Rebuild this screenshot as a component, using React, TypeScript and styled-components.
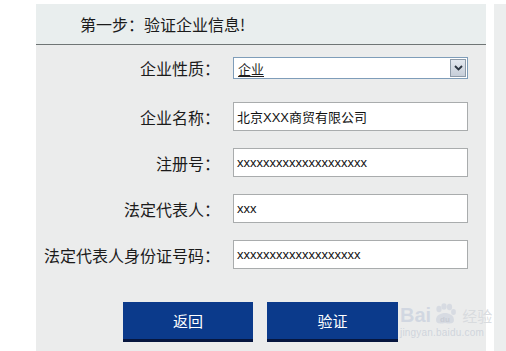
import * as React from "react";
import styled, { createGlobalStyle } from "styled-components";

const GlobalStyle = createGlobalStyle`
  html, body {
    margin: 0;
    padding: 0;
    background: #ffffff;
  }
  body {
    font-family: "Noto Sans CJK SC", "Liberation Sans", sans-serif;
    color: #1e1e1e;
  }
`;

const Page = styled.div`
  display: flex;
  align-items: stretch;
  width: 506px;
  height: 351px;
  padding: 4px 0 0 36px;
  box-sizing: border-box;
  gap: 8px;
  overflow: hidden;
  position: relative;
`;

const Panel = styled.div`
  width: 450px;
  flex-shrink: 0;
  background: #ebecec;
  display: flex;
  flex-direction: column;
`;

const SideStrip = styled.div`
  flex: 1;
  background: #eceeee;
`;

const Header = styled.div`
  height: 40px;
  background: #e9eeee;
  border-bottom: 1px solid #6f7575;
  display: flex;
  align-items: center;
  padding-left: 44px;
  font-size: 16px;
  color: #1b1b1b;
`;

const Form = styled.div`
  display: flex;
  flex-direction: column;
  gap: 17px;
  padding-top: 12px;
`;

const Row = styled.div<{ $tall?: boolean }>`
  display: grid;
  grid-template-columns: 184px 235px;
  column-gap: 13px;
  align-items: center;
  height: ${(p) => (p.$tall ? "29px" : "22px")};
  margin-bottom: ${(p) => (p.$tall ? "0" : "6px")};
`;

const Label = styled.span`
  text-align: right;
  font-size: 16px;
  line-height: 1;
  white-space: nowrap;
  color: #1b1b1b;
`;

const Input = styled.div`
  height: 29px;
  box-sizing: border-box;
  background: #ffffff;
  border: 1px solid #a9acad;
  display: flex;
  align-items: center;
  padding-left: 3px;
  font-family: "Liberation Sans", "Noto Sans CJK SC", sans-serif;
  font-size: 13px;
  color: #111;
`;

const Select = styled.div`
  height: 22px;
  box-sizing: border-box;
  background: #ffffff;
  border: 1px solid #7f9db9;
  display: flex;
  align-items: center;
  justify-content: space-between;
  padding: 0 1px 0 4px;
  font-size: 13px;
`;

const SelectValue = styled.span`
  text-decoration: underline;
  text-underline-offset: 2px;
`;

const ArrowButton = styled.div`
  width: 16px;
  height: 18px;
  box-sizing: border-box;
  border: 1px solid #8d9aa8;
  background: linear-gradient(#e3e8ef, #c6ced9);
  display: flex;
  align-items: center;
  justify-content: center;
`;

const Buttons = styled.div`
  display: flex;
  gap: 14px;
  margin-top: 33px;
  padding-left: 87px;
`;

const Button = styled.div<{ $width: number }>`
  width: ${(p) => p.$width}px;
  height: 40px;
  box-sizing: border-box;
  background: #0b3a8b;
  border-bottom: 3px solid #06163f;
  color: #ffffff;
  font-size: 15px;
  display: flex;
  align-items: center;
  justify-content: center;
`;

const Watermark = styled.div`
  position: absolute;
  left: 400px;
  top: 303px;
  display: flex;
  flex-direction: column;
  color: rgba(205, 212, 224, 0.85);
  pointer-events: none;
`;

const MarkTop = styled.div`
  display: flex;
  align-items: flex-end;
  gap: 2px;
  font-family: "Liberation Sans", sans-serif;
  font-weight: bold;
  font-size: 20px;
  line-height: 20px;
`;

const MarkCn = styled.span`
  font-family: "Noto Sans CJK SC", sans-serif;
  font-weight: normal;
  font-size: 15px;
  line-height: 18px;
  color: rgba(215, 218, 222, 0.95);
  margin-left: 3px;
`;

const MarkUrl = styled.span`
  font-family: "Liberation Sans", sans-serif;
  font-size: 10px;
  line-height: 12px;
  margin-top: 2px;
  letter-spacing: 0.2px;
  color: rgba(200, 206, 216, 0.8);
`;

const Paw = () => (
  <svg width="24" height="22" viewBox="0 0 24 22">
    <g fill="rgba(214,218,226,0.95)">
      <ellipse cx="6" cy="6" rx="2.6" ry="3.2" />
      <ellipse cx="11" cy="3.5" rx="2.6" ry="3.2" />
      <ellipse cx="16.5" cy="4" rx="2.6" ry="3.2" />
      <ellipse cx="20.5" cy="9" rx="2.4" ry="3" />
      <path d="M3 17 C3 12 8 10 12 10 C16 10 21 12 21 17 C21 21 17 21 12 20 C7 21 3 21 3 17 Z" />
    </g>
    <text
      x="12"
      y="18.5"
      fontSize="8"
      fontFamily="Liberation Sans, sans-serif"
      fontWeight="bold"
      textAnchor="middle"
      fill="#c8ccd4"
    >
      du
    </text>
  </svg>
);

const Chevron = () => (
  <svg width="9" height="6" viewBox="0 0 9 6">
    <path d="M1 1 L4.5 4.5 L8 1" stroke="#2b3440" strokeWidth="1.8" fill="none" />
  </svg>
);

const fields = [
  { label: "企业名称：", value: "北京XXX商贸有限公司" },
  { label: "注册号：", value: "xxxxxxxxxxxxxxxxxxxx" },
  { label: "法定代表人：", value: "xxx" },
  { label: "法定代表人身份证号码：", value: "xxxxxxxxxxxxxxxxxxx" },
];

const App = () => {
  return (
    <>
      <GlobalStyle />
      <Page>
        <Panel>
          <Header>第一步：验证企业信息!</Header>
          <Form>
            <Row>
              <Label>企业性质：</Label>
              <Select>
                <SelectValue>企业</SelectValue>
                <ArrowButton>
                  <Chevron />
                </ArrowButton>
              </Select>
            </Row>
            {fields.map((f) => (
              <Row $tall key={f.label}>
                <Label>{f.label}</Label>
                <Input>{f.value}</Input>
              </Row>
            ))}
          </Form>
          <Buttons>
            <Button $width={130}>返回</Button>
            <Button $width={131}>验证</Button>
          </Buttons>
        </Panel>
        <SideStrip />
        <Watermark>
          <MarkTop>
            <span>Bai</span>
            <Paw />
            <MarkCn>经验</MarkCn>
          </MarkTop>
          <MarkUrl>jingyan.baidu.com</MarkUrl>
        </Watermark>
      </Page>
    </>
  );
};

export default App;
